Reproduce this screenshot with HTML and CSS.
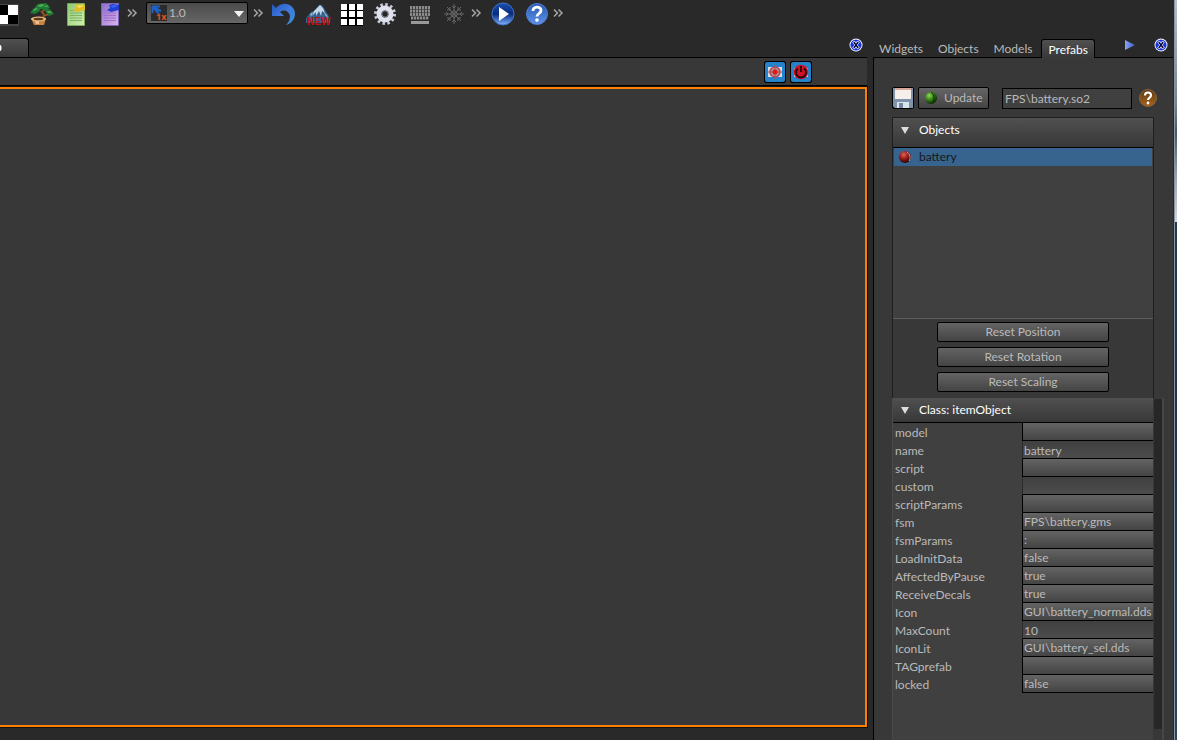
FILE: index.html
```html
<!DOCTYPE html>
<html lang="en">
<head>
<meta charset="utf-8">
<title>Prefabs</title>
<link rel="stylesheet" href="styles.css">
</head>
<body>
<svg class="defs" aria-hidden="true">
  <defs>
    <radialGradient id="green" cx=".35" cy=".3" r=".7"><stop offset="0" stop-color="#8fd860"/><stop offset=".45" stop-color="#3f8f1c"/><stop offset="1" stop-color="#0e2a06"/></radialGradient>
    <radialGradient id="red" cx=".4" cy=".3" r=".7"><stop offset="0" stop-color="#d9665f"/><stop offset=".5" stop-color="#9c1b17"/><stop offset="1" stop-color="#2c0504"/></radialGradient>
    <linearGradient id="play" x2="0" y2="1"><stop offset="0" stop-color="#1c4fae"/><stop offset=".5" stop-color="#072a7c"/><stop offset="1" stop-color="#7fb4ff"/></linearGradient>
    <linearGradient id="help" x2="0" y2="1"><stop offset="0" stop-color="#2a59b4"/><stop offset="1" stop-color="#5d92e6"/></linearGradient>
    <linearGradient id="brown" x2="0" y2="1"><stop offset="0" stop-color="#5f3a14"/><stop offset="1" stop-color="#a8641c"/></linearGradient>
    <linearGradient id="notegreen" x2="1" y2="1"><stop offset="0" stop-color="#8cc86e"/><stop offset="1" stop-color="#d5efb0"/></linearGradient>
    <linearGradient id="notepurple" x2="1" y2="1"><stop offset="0" stop-color="#8c6ec8"/><stop offset="1" stop-color="#dcb4ee"/></linearGradient>
    <linearGradient id="undo" x2="1" y2="1"><stop offset="0" stop-color="#2456c0"/><stop offset=".5" stop-color="#3f7ade"/><stop offset="1" stop-color="#3b8fd0"/></linearGradient>
    <linearGradient id="arrow" x2="1"><stop offset="0" stop-color="#8ea4f0"/><stop offset="1" stop-color="#3d5cd0"/></linearGradient>
    <symbol id="close" viewBox="0 0 14 14"><circle cx="7" cy="7" r="6.500" fill="#fff"/><circle cx="7" cy="7" r="5.500" fill="#1a34e0"/><path d="M4.500 3.500l5 7M9.500 3.500l-5 7" stroke="#fff" stroke-width="3"/><path d="M4.800 4l4.400 6M9.200 4l-4.400 6" stroke="#050b3c" stroke-width="1.500"/><path d="M1.800 7h2.500M9.700 7h2.500" stroke="#1a34e0" stroke-width="3"/></symbol>
  </defs>
</svg>
<div class="app">
  <header class="toolbar">
    <div class="tools first">
      <button class="tool"><svg viewBox="0 0 24 24"><path fill="#444" d="M2 3h21v22H2z"/><path fill="#000" d="M3 4h9v10H3zM12 14h10v9H12z"/><path fill="#fff" d="M12 4h10v10H12zM3 14h9v9H3z"/></svg></button>
      <button class="tool"><svg viewBox="0 0 24 24"><path d="M12 17c4-3 1-5-1-7M11 11l5-3M13 15l6-2" stroke="#8d5123" stroke-width="2" fill="none"/><g fill="#1f7a35"><path d="M5 6l3-3 8-1 4 4-3 4-6-2-4 3z"/><path d="M0 12l4-5 4-1 2 4-5 3zM15 10l5-2 4 5-5 2z"/></g><g fill="#4fae55"><path d="M7 5l4-2 4 1-4 2zM3 9l3-2 2 1-4 2zM17 10l3 0 2 2-4 0zM14 6l3-2 1 2z"/></g><path d="M1 17h15l-2 7H4z" fill="#c98443"/><ellipse cx="8.500" cy="18" rx="7.500" ry="2.500" fill="#e8b77c"/><ellipse cx="8.500" cy="18" rx="5" ry="1.300" fill="#5c3a1c"/><path d="M5 20l1 3h3v-3z" fill="#ebbd8a"/></svg></button>
      <button class="tool"><svg viewBox="0 0 24 24"><path fill="url(#notegreen)" stroke="#79a75a" d="M3.500 2.500h17v22h-17z"/><path d="M6 12h12M6 14.500h12M6 17h12M6 19.500h12M6 9.500h5" stroke="#79b16a"/><path d="M11 4l4-1 6 1v5l-8 2-4-2 3-2z" fill="#e2bd22"/><path d="M12 5l4-1 4 1-5 2z" fill="#f4dd65"/></svg></button>
      <button class="tool"><svg viewBox="0 0 24 24"><path fill="url(#notepurple)" stroke="#7a62b4" d="M3.500 2.500h17v22h-17z"/><path d="M6 12h12M6 14.500h12M6 17h12M6 19.500h12M6 9.500h5" stroke="#a06fce"/><path d="M11 4l4-1 6 1v5l-8 2-4-2 3-2z" fill="#1f3fd0"/><path d="M12 5l4-1 4 1-5 2z" fill="#3d62ec"/></svg></button>
    </div>
    <button class="more"><svg viewBox="0 0 12 12"><path d="M2 2.500l3.500 3.500L2 9.500M6.500 2.500l3.500 3.500-3.500 3.500"/></svg></button>
    <div class="scale">
      <select class="scale-select"><option>1.0</option></select>
      <svg class="scale-icon" viewBox="0 0 16 16"><path fill="#2b2b2b" d="M0 0h16v16H0z"/><path d="M2 2l6 7M1.500 1v7M1 1.500h8M2 2l8 4" stroke="#1f62c8" stroke-width="2"/><text x="5" y="15" class="once">1x</text></svg>
      <svg class="scale-arrow" viewBox="0 0 10 6"><path d="M0 0h10L5 6z" fill="#f2f2f2"/></svg>
    </div>
    <button class="more"><svg viewBox="0 0 12 12"><path d="M2 2.500l3.500 3.500L2 9.500M6.500 2.500l3.500 3.500-3.500 3.500"/></svg></button>
    <div class="tools">
      <button class="tool"><svg viewBox="0 0 24 24"><path d="M0 3v12h12l-4-4c4-3 9-1 10 4 0 3-1 6-4 9 6-2 9-6 9-12C22 3 11-1 4 7z" fill="url(#undo)"/></svg></button>
      <button class="tool"><svg viewBox="0 0 24 24"><path d="M0 17l5-6 3-1 5-6 3 0 8 13v5H0z" fill="#34618e"/><path d="M14 4l3 3 2 5-3-2-1 5-2-5-3 5v-4l-4 4 2-5z" fill="#c3d7e8"/><path d="M4 13l3-2-2 5zM18 11l3 3 1 3-3-3z" fill="#8db5d8"/><text x="1" y="24" class="new">NEW</text></svg></button>
      <button class="tool"><svg viewBox="0 0 24 24"><path d="M1 3h22v22H1z" fill="#000"/><path d="M1 3h6v6H1zM9 3h6v6H9zM17 3h6v6h-6zM1 10h6v6H1zM9 10h6v6H9zM17 10h6v6h-6zM1 18h6v6H1zM9 18h6v6H9zM17 18h6v6h-6z" fill="#fff"/></svg></button>
      <button class="tool"><svg viewBox="0 0 24 24"><circle cx="11" cy="13" r="9.500" fill="none" stroke="#c9ccde" stroke-width="3" stroke-dasharray="2.500 2.474"/><circle cx="11" cy="13" r="6" fill="none" stroke="#dfe1ec" stroke-width="5"/><circle cx="11" cy="13" r="3.200" fill="#252525" stroke="#8b8d9b"/></svg></button>
      <button class="tool"><svg viewBox="0 0 24 24"><path d="M2 6.500h20M2 10h20M2 13.500h20M3 17h18" stroke="#8b8b8b" stroke-width="3" stroke-dasharray="2.300 .7"/><path d="M3 20h18v3H3z" fill="#999"/></svg></button>
      <button class="tool"><svg viewBox="0 0 24 24"><g stroke="#666" stroke-width="1" fill="none"><path d="M12 3v20M2 13h20M5 6l14 14M19 6L5 20"/><path d="M10 5l2 2 2-2M10 21l2-2 2 2M4 11l2 2-2 2M20 11l-2 2 2 2M5 9h3V6M19 9h-3V6M5 17h3v3M19 17h-3v3M12 9l4 4-4 4-4-4z"/></g></svg></button>
    </div>
    <button class="more"><svg viewBox="0 0 12 12"><path d="M2 2.500l3.500 3.500L2 9.500M6.500 2.500l3.500 3.500-3.500 3.500"/></svg></button>
    <div class="tools last">
      <button class="tool"><svg viewBox="0 0 24 24"><circle cx="13" cy="13" r="11" fill="url(#play)" stroke="#3b74cf"/><path d="M9 6l10 7-10 7z" fill="#fff"/></svg></button>
      <button class="tool"><svg viewBox="0 0 24 24"><circle cx="13" cy="13" r="10.500" fill="url(#help)" stroke="#4f7fd4"/><path d="M9 10c0-5 8-5 8-.5 0 3-4 3-4 6" fill="none" stroke="#fff" stroke-width="2.800"/><circle cx="13" cy="19" r="1.800" fill="#fff"/></svg></button>
    </div>
    <button class="more"><svg viewBox="0 0 12 12"><path d="M2 2.500l3.500 3.500L2 9.500M6.500 2.500l3.500 3.500-3.500 3.500"/></svg></button>
  </header>

  <div class="work">
    <main class="editor">
      <div class="tabs">
        <button class="doc-tab"><svg viewBox="0 0 4 8"><ellipse cx="0" cy="4" rx="1.500" ry="3" fill="#fff"/></svg></button>
        <button class="close"><svg viewBox="0 0 14 14"><use href="#close"/></svg></button>
      </div>
      <div class="view-bar">
        <button class="view-btn"><svg viewBox="0 0 20 20"><rect width="20" height="20" rx="3" fill="#2384cc"/><path d="M3 5h14v10H3z" fill="#d9dde4"/><circle cx="10" cy="10" r="5" fill="#b9909a" stroke="#b4474e" stroke-width="1.500"/><path d="M10 3v14M3 10h14" stroke="#a5555c"/><circle cx="10" cy="10" r="2.500" fill="#e01818"/></svg></button>
        <button class="view-btn"><svg viewBox="0 0 20 20"><rect width="20" height="20" rx="3" fill="#2384cc"/><path d="M3 6h14v9H3z" fill="#c4d5e4"/><circle cx="10" cy="10" r="7.300" fill="#d21224"/><path d="M7 6.500a5 5 0 1 0 6 0M10 4v6" fill="none" stroke="#23070b" stroke-width="1.800"/></svg></button>
      </div>
      <div class="canvas"></div>
    </main>

    <aside class="side">
      <div class="tabs side-tabs">
        <button class="tab">Widgets</button>
        <button class="tab">Objects</button>
        <button class="tab">Models</button>
        <button class="tab active">Prefabs</button>
        <button class="next"><svg viewBox="0 0 12 12"><path d="M1 1l10 5-10 5z" fill="url(#arrow)"/></svg></button>
        <button class="close"><svg viewBox="0 0 14 14"><use href="#close"/></svg></button>
      </div>
      <div class="panel">
        <div class="file-row">
          <button class="save"><svg viewBox="0 0 20 20"><path d="M0 0h20v20H2l-2-2z" fill="#7e92ac"/><path d="M2 0h16v11H2z" fill="#f6eeeb"/><path d="M2 0h16v2H2z" fill="#d6a79b"/><path d="M4 14h12v6H4z" fill="#dce4ea"/><path d="M6 15h4v5H6z" fill="#74889f"/></svg></button>
          <button class="update"><svg viewBox="0 0 14 14"><circle cx="7" cy="7" r="6" fill="url(#green)"/><path d="M7 1c4 3 4 9 0 12" fill="none" stroke="#12300a"/></svg>Update</button>
          <input class="path" type="text" value="FPS\battery.so2">
          <button class="help"><svg viewBox="0 0 18 18"><circle cx="9" cy="9" r="8.500" fill="url(#brown)" stroke="#8a6136"/><path d="M6 6.500c0-4 6-4 6 0 0 2-3 2.500-3 4.500" fill="none" stroke="#fff" stroke-width="2.200"/><circle cx="9" cy="14" r="1.400" fill="#fff"/></svg></button>
        </div>
        <section class="objects">
          <h2 class="head"><svg viewBox="0 0 8 8"><path d="M0 1h8L4 8z" fill="#ddd"/></svg>Objects</h2>
          <ul class="list">
            <li class="item"><svg viewBox="0 0 14 14"><circle cx="7" cy="7" r="6" fill="url(#red)"/><path d="M9 2c3 2 4 6 2 9" fill="none" stroke="#b9a9b5"/></svg>battery</li>
          </ul>
          <div class="resets">
            <button class="reset">Reset Position</button>
            <button class="reset">Reset Rotation</button>
            <button class="reset">Reset Scaling</button>
          </div>
        </section>
        <section class="class-box">
          <div class="class-main">
            <h2 class="head small"><svg viewBox="0 0 8 8"><path d="M0 1h8L4 8z" fill="#ddd"/></svg>Class: itemObject</h2>
            <table class="props">
              <tr><th><label for="p1">model</label></th><td><button class="value" id="p1"></button></td></tr>
              <tr><th><label for="p2">name</label></th><td><input class="value" id="p2" value="battery"></td></tr>
              <tr><th><label for="p3">script</label></th><td><button class="value" id="p3"></button></td></tr>
              <tr><th><label for="p4">custom</label></th><td><input class="value" id="p4" value=""></td></tr>
              <tr><th><label for="p5">scriptParams</label></th><td><button class="value" id="p5"></button></td></tr>
              <tr><th><label for="p6">fsm</label></th><td><button class="value" id="p6">FPS\battery.gms</button></td></tr>
              <tr><th><label for="p7">fsmParams</label></th><td><button class="value" id="p7">:</button></td></tr>
              <tr><th><label for="p8">LoadInitData</label></th><td><button class="value" id="p8">false</button></td></tr>
              <tr><th><label for="p9">AffectedByPause</label></th><td><button class="value" id="p9">true</button></td></tr>
              <tr><th><label for="p10">ReceiveDecals</label></th><td><button class="value" id="p10">true</button></td></tr>
              <tr><th><label for="p11">Icon</label></th><td><button class="value" id="p11">GUI\battery_normal.dds</button></td></tr>
              <tr><th><label for="p12">MaxCount</label></th><td><input class="value" id="p12" value="10"></td></tr>
              <tr><th><label for="p13">IconLit</label></th><td><button class="value" id="p13">GUI\battery_sel.dds</button></td></tr>
              <tr><th><label for="p14">TAGprefab</label></th><td><button class="value" id="p14"></button></td></tr>
              <tr><th><label for="p15">locked</label></th><td><button class="value" id="p15">false</button></td></tr>
            </table>
          </div>
          <div class="scroll"></div>
        </section>
      </div>
    </aside>
  </div>
</div>
<div class="desktop"></div>
</body>
</html>
```

FILE: styles.css
```css
* { box-sizing: border-box; }
body {
  margin: 0;
  height: 100vh;
  display: flex;
  overflow: hidden;
  background: #292929;
  color: #bababa;
  font: 12px/18px Lato, "Open Sans", sans-serif;
}
button, input, select { font: inherit; color: inherit; margin: 0; padding: 0; border: 0; background: none; border-radius: 0; }
svg { display: block; }
.defs { position: absolute; width: 0; height: 0; }
.app { flex: 1; min-width: 0; display: flex; flex-direction: column; }
.desktop { width: 3px; border-left: 1px solid #8795a5; background: linear-gradient(#b9c0c8 0, #76818e 14%, #4b5767 18%, #9aa3ad 24%, #d5d7d9 30%, #23384d 30%, #1f3448 60%, #2c4358 100%); }

.toolbar { height: 28px; display: flex; align-items: center; gap: 4px; flex: none; padding-bottom: 2px; }
.tools { display: flex; gap: 10px; margin-left: 4px; }
.tools.first { margin-left: -4px; }
.tool, .tool svg { width: 24px; height: 24px; }
.tool svg { overflow: visible; }
.more, .more svg { width: 12px; height: 12px; }
.more path { fill: none; stroke: #a6a6a6; stroke-width: 1.5; }
.scale { position: relative; margin-left: 4px; }
.scale-select { display: block; appearance: none; width: 102px; height: 22px; padding-left: 22px; border: 1px solid #000; border-radius: 2px; background: linear-gradient(#4a4a4a, #666); }
.scale-icon { position: absolute; left: 5px; top: 3px; width: 16px; height: 16px; overflow: visible; }
.scale-arrow { position: absolute; right: 4px; top: 9px; width: 10px; height: 6px; }
.once { font: bold 9px "Open Sans", sans-serif; fill: #e8521e; }
.new { font: bold 10px "Liberation Sans", sans-serif; fill: #c01010; }

.work { flex: 1; min-height: 0; display: flex; gap: 6px; }
.editor { flex: 1; min-width: 0; display: flex; flex-direction: column; padding-bottom: 13px; }
.tabs { height: 30px; flex: none; display: flex; align-items: flex-end; border-bottom: 1px solid #000; }
.doc-tab { width: 29px; height: 19px; border: 1px solid #000; border-width: 1px 1px 0 0; border-radius: 0 3px 0 0; background: linear-gradient(#505050, #383838); }
.doc-tab svg { width: 4px; height: 8px; }
.close, .close svg { width: 14px; height: 14px; }
.close { margin: 0 4px 5px auto; }
.view-bar { height: 28px; flex: none; display: flex; justify-content: flex-end; align-items: center; gap: 4px; padding-right: 55px; background: #383838; border-bottom: 1px solid #000; }
.view-btn { width: 22px; height: 22px; border: 1px solid #000; border-radius: 2px; }
.view-btn svg { width: 20px; height: 20px; }
.canvas { flex: 1; margin-top: 1px; border: solid #ff8000; border-width: 2px 2px 2px 0; background: #383838; outline: 1px solid #111; }

.side { width: 301px; flex: none; display: flex; flex-direction: column; padding-right: 1px; }
.tab { height: 18px; padding: 0 6px; margin-right: 3px; line-height: 20px; }
.tab.active { height: 19px; border: 1px solid #000; border-bottom: 0; border-radius: 3px 3px 0 0; background: linear-gradient(#505050, #383838); color: #fff; margin-bottom: -1px; }
.next, .next svg { width: 12px; height: 12px; }
.next { margin: 0 0 6px auto; }
.side-tabs .close { margin-left: 18px; margin-right: 5px; }
.panel { flex: 1; min-height: 0; display: flex; flex-direction: column; padding: 29px 9px 0 18px; border-left: 1px solid #000; background: #383838; }
.file-row { display: flex; align-items: center; gap: 4px; height: 22px; margin-bottom: 8px; flex: none; }
.save { width: 22px; height: 22px; border: 1px solid #000; border-radius: 2px; }
.save svg { width: 20px; height: 20px; }
.update { width: 71px; height: 22px; display: flex; align-items: center; gap: 6px; padding-left: 5px; border: 1px solid #000; border-radius: 2px; background: linear-gradient(#666, #444); }
.update svg { width: 14px; height: 14px; }
.path { flex: 1; min-width: 0; height: 21px; margin-left: 9px; padding-left: 2px; border: 1px solid #000; background: #404040; }
.help { width: 18px; height: 18px; margin: 0 7px 0 3px; }
.objects { margin-right: 10px; border: 1px solid #1f1f1f; border-bottom: 0; flex: none; }
.head { display: flex; align-items: center; gap: 10px; margin: 0; height: 30px; padding: 0 8px 6px; border-bottom: 1px solid #000; background: linear-gradient(#505050, #383838); color: #fff; font-size: 12px; font-weight: 400; }
.head svg { width: 8px; height: 8px; }
.head.small { height: 25px; padding-bottom: 0; }
.list { height: 171px; margin: 0; padding: 0 1px; list-style: none; background: #404040; border-bottom: 1px solid #5c5c5c; }
.item { display: flex; align-items: center; gap: 7px; height: 18px; padding-left: 4px; background: #36648f; color: #181818; }
.item svg { width: 14px; height: 14px; }
.resets { display: flex; flex-direction: column; align-items: center; gap: 5px; padding: 3px 0 6px; }
.reset { width: 172px; height: 20px; border: 1px solid #000; border-radius: 2px; background: linear-gradient(#646464, #444); line-height: 18px; }
.class-box { flex: 1; min-height: 0; display: flex; border-right: 2px solid #474747; }
.class-main { flex: 1; min-width: 0; border-left: 1px solid #4a4a4a; background: #404040; }
.scroll { width: 8px; margin: 1px 0 11px 1px; background: #272727; }
.props { width: 100%; table-layout: fixed; border-collapse: collapse; }
.props th, .props td { padding: 0; height: 18px; font-weight: 400; text-align: left; }
.props th { width: 129px; padding-left: 2px; line-height: 20px; }
.props label { display: block; height: 18px; }
.value { display: block; width: 100%; height: 18px; padding: 1px 0 0 1px; border: solid #000; border-width: 0 0 1px 1px; background: linear-gradient(#646464, #444); text-align: left; line-height: 16px; white-space: nowrap; overflow: hidden; }
input.value { background: linear-gradient(#404040, #4c4c4c); border-left-color: #2c2c2c; }
```
